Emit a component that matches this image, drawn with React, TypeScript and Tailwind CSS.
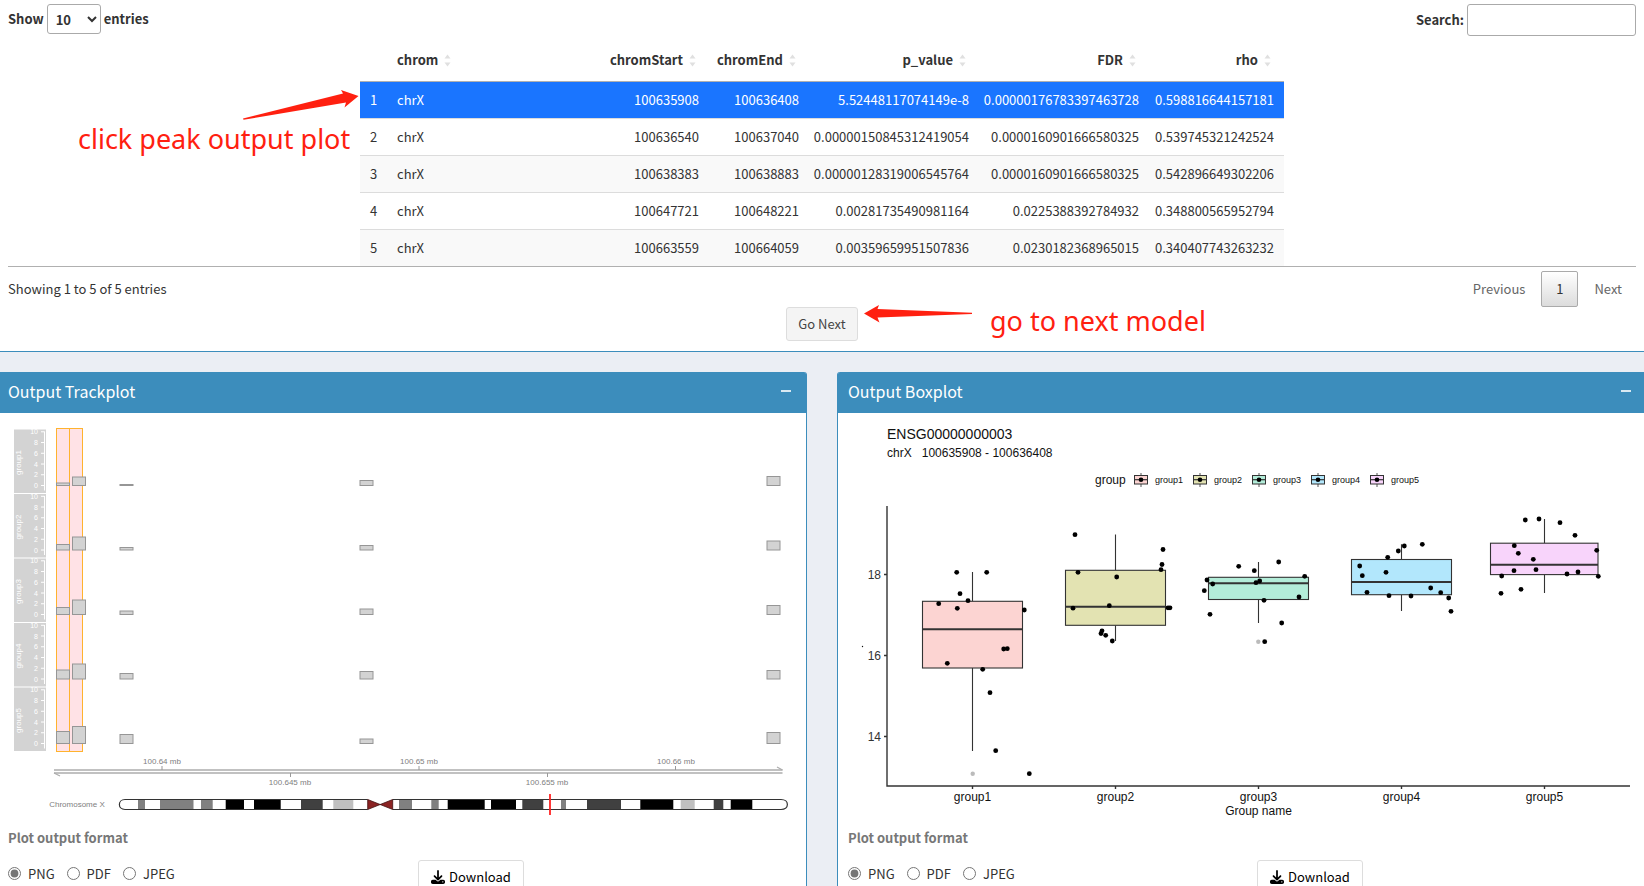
import { useState } from "react";
import { FaDownload } from "react-icons/fa6";

type Peak = {
  chrom: string;
  start: string;
  end: string;
  p: string;
  fdr: string;
  rho: string;
};

const peaks: Peak[] = [
  { chrom: "chrX", start: "100635908", end: "100636408", p: "5.52448117074149e-8", fdr: "0.00000176783397463728", rho: "0.598816644157181" },
  { chrom: "chrX", start: "100636540", end: "100637040", p: "0.00000150845312419054", fdr: "0.0000160901666580325", rho: "0.539745321242524" },
  { chrom: "chrX", start: "100638383", end: "100638883", p: "0.00000128319006545764", fdr: "0.0000160901666580325", rho: "0.542896649302206" },
  { chrom: "chrX", start: "100647721", end: "100648221", p: "0.00281735490981164", fdr: "0.0225388392784932", rho: "0.348800565952794" },
  { chrom: "chrX", start: "100663559", end: "100664059", p: "0.00359659951507836", fdr: "0.0230182368965015", rho: "0.340407743263232" },
];

const columns = [
  { name: "chrom", width: "w-[215px]" },
  { name: "chromStart", width: "w-[107px]" },
  { name: "chromEnd", width: "w-[100px]" },
  { name: "p_value", width: "w-[170px]" },
  { name: "FDR", width: "w-[170px]" },
  { name: "rho", width: "w-[135px]" },
];

function SortIcon() {
  return (
    <svg className="h-[13px] w-[7px] shrink-0" viewBox="0 0 7 13" fill="#e0e0e0" aria-hidden="true">
      <path d="M3.5 0.5 6.5 4.5h-6z" />
      <path d="M3.5 12.5 6.5 8.5h-6z" />
    </svg>
  );
}

function PeakTable() {
  const [selected, setSelected] = useState(0);
  return (
    <table className="mx-auto w-[924px] table-fixed border-collapse">
      <thead>
        <tr className="h-[41px] border-b border-[#b0b0b0]">
          <th className="w-[27px]" />
          {columns.map((c, i) => (
            <th key={c.name} className={`${c.width} px-[10px] pt-0 font-bold`}>
              <button
                type="button"
                className={`flex w-full items-center gap-[6px] ${i === 0 ? "justify-start" : "justify-end pr-[3px]"}`}
              >
                {c.name}
                <SortIcon />
              </button>
            </th>
          ))}
        </tr>
      </thead>
      <tbody>
        {peaks.map((r, i) => (
          <tr
            key={r.start}
            onClick={() => setSelected(i)}
            className={`h-[37px] border-b border-[#dcdcdc] last:border-b-0 ${
              i === selected ? "bg-[#1a75ff] text-white" : i % 2 === 0 ? "bg-[#f9f9f9]" : "bg-white"
            }`}
          >
            <td className="pl-[10px]">{i + 1}</td>
            <td className="pl-[10px]">{r.chrom}</td>
            <td className="pr-[10px] text-right">{r.start}</td>
            <td className="pr-[10px] text-right">{r.end}</td>
            <td className="pr-[10px] text-right">{r.p}</td>
            <td className="pr-[10px] text-right">{r.fdr}</td>
            <td className="pr-[10px] text-right">{r.rho}</td>
          </tr>
        ))}
      </tbody>
    </table>
  );
}

const trackBottoms = [485.5, 550, 614.5, 679, 743.5];
const trackColumns = [
  { x: 56.5, tops: [483, 544.5, 607.5, 670, 731.5] },
  { x: 72.5, tops: [477, 537, 600, 664, 726.5] },
  { x: 120, tops: [484.5, 547.5, 611, 673.5, 734.5] },
  { x: 360, tops: [480.5, 545.5, 609, 671.5, 739] },
  { x: 767, tops: [476.5, 541, 605.5, 670.5, 732.5] },
];

const bands: [number, number, string][] = [
  [138, 145, "#808080"],
  [160, 193.5, "#808080"],
  [201, 212.7, "#808080"],
  [225.7, 244, "#000"],
  [254, 280.7, "#000"],
  [301, 322.7, "#404040"],
  [333.3, 353.3, "#c0c0c0"],
  [399, 412, "#808080"],
  [431.3, 438.7, "#808080"],
  [447.7, 484.7, "#000"],
  [491, 516, "#000"],
  [522.3, 543.3, "#404040"],
  [561, 566, "#808080"],
  [587, 621, "#404040"],
  [640.3, 673.3, "#000"],
  [680.7, 694.7, "#c0c0c0"],
  [713.7, 723.3, "#404040"],
  [730.7, 752.3, "#000"],
];

function TrackPlot() {
  return (
    <svg className="block h-auto w-full" viewBox="0 413 806 407" fontFamily="Liberation Sans, Arial, sans-serif" role="img" aria-label="Track plot">
      {trackBottoms.map((b, g) => {
        const top = b - 56;
        return (
          <g key={b}>
            <rect x="14" y={top} width="32" height="63.5" fill="#d3d3d3" />
            <text transform={`translate(21 ${top + 33}) rotate(-90)`} textAnchor="middle" fontSize="8" fill="#fff">
              {`group${g + 1}`}
            </text>
            <path d={`M44.5 ${b - 54}V${b + 5}`} stroke="#fff" fill="none" />
            {[0, 2, 4, 6, 8, 10].map((v) => (
              <g key={v}>
                <path d={`M41 ${b - v * 5.37}h3.5`} stroke="#fff" />
                <text x="38" y={b - v * 5.37 + 2.5} textAnchor="end" fontSize="7" fill="#fff">
                  {v}
                </text>
              </g>
            ))}
          </g>
        );
      })}
      <g fill="#ffe2e6" stroke="#ffb32e">
        <rect x="56.5" y="428.5" width="13" height="323" />
        <rect x="69.5" y="428.5" width="13" height="323" />
      </g>
      <g fill="#d3d3d3" stroke="#969696">
        {trackColumns.map((c) =>
          c.tops.map((t, g) => <rect key={`${c.x}-${t}`} x={c.x} y={t} width="13" height={trackBottoms[g] - t} />),
        )}
      </g>
      <g stroke="#adadad" fill="none">
        <path strokeWidth="1.5" d="M54 770H782.500M54 773H782.500" />
        <path strokeWidth="1.2" d="M54 773l6 3M782.500 770l-5.500 -3" />
        <path d="M162 766v4M419 766v4M675.500 766v4M290.500 773v4M547.500 773v4" stroke="#999" />
      </g>
      <g fontSize="8" fill="#808080" textAnchor="middle">
        <text x="162" y="764">100.64 mb</text>
        <text x="419" y="764">100.65 mb</text>
        <text x="676" y="764">100.66 mb</text>
        <text x="290" y="785">100.645 mb</text>
        <text x="547" y="785">100.655 mb</text>
        <text x="77" y="807">Chromosome X</text>
      </g>
      {bands.map(([a, b, color]) => (
        <rect key={a} x={a} y="799" width={b - a} height="10.500" fill={color} />
      ))}
      <path
        d="M367.700 799.500H125C117.500 799.500 117.500 809.500 125 809.500H367.700M392.700 799.500H781C789.500 799.500 789.500 809.500 781 809.500H392.700"
        fill="none"
        stroke="#333"
        strokeWidth="1.2"
      />
      <path d="M367.700 799.500 392.700 809.500V799.500L367.700 809.500Z" fill="#8b2323" stroke="#401010" strokeWidth="0.8" />
      <path d="M550 794v21" stroke="#f22" strokeWidth="1.8" />
    </svg>
  );
}

type Group = {
  name: string;
  fill: string;
  x: [number, number];
  mid: number;
  q: [number, number, number];
  whisker: [number, number];
  points: [number, number][];
  outlier?: [number, number];
};

const groups: Group[] = [
  {
    name: "group1", fill: "#fcd4d2", x: [922.5, 1022.5], mid: 972.5, q: [601.3, 629.3, 668], whisker: [572, 751],
    points: [[956.7, 572.3], [986.7, 572.3], [960, 593.7], [968, 600.7], [938.7, 603.7], [957.3, 608.3], [1024.3, 610], [1003.7, 649], [1007.3, 648.7], [947.3, 663.3], [982.7, 669.3], [990, 692.7], [995.7, 750.7], [1029.3, 773.7]],
    outlier: [972.7, 773.7],
  },
  {
    name: "group2", fill: "#e3e3b2", x: [1065.5, 1165.5], mid: 1115.5, q: [570.3, 606.8, 625.3], whisker: [534.5, 641],
    points: [[1075, 534.7], [1163, 549.5], [1162, 564.5], [1161, 569.7], [1078, 572.3], [1116.7, 577], [1109.3, 605.7], [1073, 608.2], [1168, 607.8], [1170, 607.8], [1102, 630.8], [1101, 633.5], [1105.7, 635.3], [1112.3, 641]],
  },
  {
    name: "group3", fill: "#b3edd9", x: [1208.5, 1308.5], mid: 1258.5, q: [577.3, 583.3, 599.5], whisker: [562, 623],
    points: [[1238.7, 566.3], [1207, 580], [1204.3, 590.7], [1212.7, 584], [1210, 614.3], [1278.7, 562], [1254.3, 570.7], [1304.7, 576.3], [1256, 582.7], [1259.7, 581], [1299, 597], [1264, 600.3], [1281.7, 623], [1264.7, 641.7]],
    outlier: [1258.3, 641.7],
  },
  {
    name: "group4", fill: "#b2e7fc", x: [1351.5, 1451.5], mid: 1401.5, q: [559.5, 582, 594.7], whisker: [544.3, 611],
    points: [[1404.3, 546], [1422.3, 544.3], [1398.3, 551], [1387.7, 557.3], [1359.7, 566], [1362.3, 575.7], [1386, 572.3], [1430.7, 588], [1367, 592.3], [1389, 595.7], [1411, 596], [1440.7, 592.7], [1448.7, 598], [1451, 611.3]],
  },
  {
    name: "group5", fill: "#f8d4fb", x: [1490.5, 1598], mid: 1544.5, q: [543.2, 564.7, 574.6], whisker: [519, 593],
    points: [[1525.3, 520], [1539, 519], [1560, 522.7], [1575, 535.3], [1514.3, 545.7], [1518.3, 553.3], [1533.3, 559.3], [1596.7, 550.3], [1514, 570.7], [1536, 569.7], [1567, 574], [1578, 572], [1501.7, 576], [1598.3, 576.3], [1501, 593.3], [1521, 589.3]],
  },
];

function BoxPlot() {
  return (
    <svg className="block h-auto w-full" viewBox="838 413 806 407" fontFamily="Liberation Sans, Arial, sans-serif" fontSize="12" fill="#111" role="img" aria-label="Box plot">
      <text x="887" y="439" fontSize="14">ENSG00000000003</text>
      <text x="887" y="457">chrX{"\u00a0\u00a0\u00a0"}100635908 - 100636408</text>
      <text x="1095" y="484">group</text>
      {groups.map((g, i) => {
        const x = 1134.5 + i * 59;
        return (
          <g key={g.name}>
            <path d={`M${x + 6.5} 473v14`} stroke="#555" />
            <rect x={x} y="475.5" width="13" height="8.500" fill={g.fill} stroke="#333" />
            <path d={`M${x} 479.7h13`} stroke="#333" strokeWidth="1.2" />
            <circle cx={x + 6.5} cy="479.700" r="2.300" fill="#000" />
            <text x={x + 20.5} y="483" fontSize="9">{g.name}</text>
          </g>
        );
      })}
      <g stroke="#333" strokeWidth="1.4" fill="none">
        <path d="M887 506V786H1630" />
        <path d="M884 574.500h3M884 655.500h3M884 736.500h3" />
        {groups.map((g) => (
          <path key={g.name} d={`M${g.mid} 786v3`} />
        ))}
      </g>
      <g textAnchor="end" fill="#333">
        <text x="881" y="579">18</text>
        <text x="881" y="660">16</text>
        <text x="881" y="741">14</text>
      </g>
      <circle cx="862.500" cy="646.500" r="0.700" />
      {groups.map((g) => (
        <g key={g.name}>
          <path d={`M${g.mid} ${g.whisker[0]}V${g.q[0]}M${g.mid} ${g.q[2]}V${g.whisker[1]}`} stroke="#333" strokeWidth="1.1" />
          <rect x={g.x[0]} y={g.q[0]} width={g.x[1] - g.x[0]} height={g.q[2] - g.q[0]} fill={g.fill} stroke="#333" strokeWidth="1.1" />
          <path d={`M${g.x[0]} ${g.q[1]}H${g.x[1]}`} stroke="#333" strokeWidth="2" />
          {g.outlier && <circle cx={g.outlier[0]} cy={g.outlier[1]} r="2.200" fill="#bbb" />}
          {g.points.map(([x, y]) => (
            <circle key={`${x}-${y}`} cx={x} cy={y} r="2.400" fill="#000" />
          ))}
          <text x={g.mid} y="801" textAnchor="middle">{g.name}</text>
        </g>
      ))}
      <text x="1258.500" y="815" textAnchor="middle">Group name</text>
    </svg>
  );
}

function Panel({ title, id, side, children }: { title: string; id: string; side: "left" | "right"; children: React.ReactNode }) {
  const left = side === "left";
  const inset = left ? "pl-2" : "pl-[10px]";
  return (
    <section
      className={`border-[#3c8dbc] bg-white ${left ? "rounded-tr-[3px] border-r" : "rounded-tl-[3px] border-l"}`}
    >
      <header className={`flex h-[41px] items-center justify-between bg-[#3c8dbc] pb-1 text-white ${inset} ${left ? "rounded-tr-[2px] pr-[15px]" : "rounded-tl-[2px] pr-[13px]"}`}>
        <h3 className="text-base">{title}</h3>
        <button type="button" aria-label={`Collapse ${title}`} className="flex h-6 items-center">
          <span className="block h-[2px] w-[10px] bg-[#d9e9f2]" />
        </button>
      </header>
      {children}
      <div className={`flex ${inset}`}>
        <fieldset className="w-1/2 pt-2">
          <legend className="float-left w-full font-bold leading-5 text-[#777]">Plot output format</legend>
          <div className="clear-left flex gap-3 pt-4 leading-[19px]">
            {["PNG", "PDF", "JPEG"].map((f) => (
              <label key={f} className="flex items-center gap-[7px]">
                <input type="radio" name={id} defaultChecked={f === "PNG"} className="m-0 size-[13px] accent-[#767676]" />
                {f}
              </label>
            ))}
          </div>
        </fieldset>
        <div className="pb-4 pl-[11px] pt-10">
          <button type="button" className="flex h-[34px] items-center gap-1 rounded-[3px] border border-[#ddd] bg-white px-3 text-black">
            <FaDownload className="size-[14px]" />
            Download
          </button>
        </div>
      </div>
    </section>
  );
}

export default function App() {
  return (
    <div className="relative h-screen overflow-hidden bg-[#ebeef4] font-['Noto_Sans_CJK_SC','Open_Sans',sans-serif] text-[13px] leading-5 text-[#333]">
      <section className="border-b border-[#3c8dbc] bg-white px-2 pb-[10px] pt-1">
        <div className="flex items-start justify-between font-bold">
          <label className="flex items-center gap-[3px]">
            Show
            <select className="h-[30px] w-[54px] rounded-[3px] border border-[#aaa] bg-white pl-1" defaultValue="10">
              <option>10</option>
              <option>25</option>
              <option>50</option>
            </select>
            entries
          </label>
          <label className="flex items-center gap-[3px]">
            Search:
            <input type="search" className="h-8 w-[169px] rounded-[3px] border border-[#aaa] bg-white px-1 font-normal" />
          </label>
        </div>
        <div className="border-b border-[#b0b0b0] pt-1">
          <PeakTable />
        </div>
        <div className="flex items-start justify-between pt-1">
          <p className="pt-2">Showing 1 to 5 of 5 entries</p>
          <nav className="flex items-center gap-[2px] text-[#666]">
            <button type="button" className="h-9 px-[14px]">Previous</button>
            <button type="button" className="h-9 w-[37px] rounded-[2px] border border-[#aaa] bg-linear-to-b from-white to-[#dcdcdc] text-[#333]">1</button>
            <button type="button" className="h-9 px-[14px]">Next</button>
          </nav>
        </div>
        <div className="flex justify-center">
          <button type="button" className="h-[34px] w-[72px] rounded-[3px] border border-[#ddd] bg-[#f4f4f4] text-[#444]">Go Next</button>
        </div>
      </section>

      <main className="grid grid-cols-2 gap-[30px] pt-5">
        <Panel title="Output Trackplot" id="track-format" side="left">
          <TrackPlot />
        </Panel>
        <Panel title="Output Boxplot" id="box-format" side="right">
          <BoxPlot />
        </Panel>
      </main>

      <div className="pointer-events-none absolute left-[78px] top-[119px] whitespace-nowrap font-['Noto_Sans',sans-serif] text-[27px] leading-10 text-[#ff2010]">
        click peak output plot
      </div>
      <svg className="pointer-events-none absolute left-[240px] top-[88px] h-8 w-[120px]" viewBox="240 88 120 32" fill="#ff2010" aria-hidden="true">
        <path d="M243 118.500 343 93.500 341 90 358.500 96 344.500 107.500 346 102.500 243.500 119.800Z" />
      </svg>
      <div className="pointer-events-none absolute left-[990px] top-[301px] whitespace-nowrap font-['Noto_Sans',sans-serif] text-[27px] leading-10 text-[#ff2010]">
        go to next model
      </div>
      <svg className="pointer-events-none absolute left-[862px] top-[303px] h-5 w-[112px]" viewBox="862 303 112 20" fill="#ff2010" aria-hidden="true">
        <path d="M864 313.500 879 305 877.500 309 972 312.800V314L877.500 317.500 879.500 322.500Z" />
      </svg>
    </div>
  );
}
